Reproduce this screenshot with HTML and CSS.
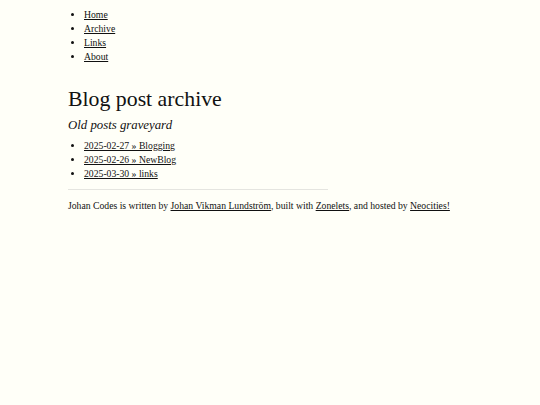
FILE: index.html
```html
<!DOCTYPE html>
<html lang="en">
<head>
<meta charset="utf-8">
<title>Blog post archive</title>
<link rel="stylesheet" href="styles.css">
</head>
<body>
<div class="container">
  <nav>
    <ul class="nav-list">
      <li><a href="#">Home</a></li>
      <li><a href="#">Archive</a></li>
      <li><a href="#">Links</a></li>
      <li><a href="#">About</a></li>
    </ul>
  </nav>
  <main>
    <h1 class="title">Blog post archive</h1>
    <p class="subtitle">Old posts graveyard</p>
    <ul class="post-list">
      <li><a href="#">2025-02-27 » Blogging</a></li>
      <li><a href="#">2025-02-26 » NewBlog</a></li>
      <li><a href="#">2025-03-30 » links</a></li>
    </ul>
  </main>
  <hr class="rule">
  <footer class="footer">Johan Codes is written by <a href="#">Johan Vikman Lundström</a>, built with <a href="#">Zonelets</a>, and hosted by <a href="#">Neocities!</a></footer>
</div>
</body>
</html>
```

FILE: styles.css
```css
html, body {
  margin: 0;
  padding: 0;
  background: #fffff8;
  color: #111111;
}
body {
  font-family: "Liberation Serif", "DejaVu Serif", serif;
  font-size: 9.7px;
  line-height: 14px;
}
.container {
  width: 404px;
  margin: 0 auto;
  padding-top: 8px;
}
a {
  color: #111111;
  text-decoration: underline;
}
ul {
  margin: 0;
  padding-left: 16px;
}
.nav-list li, .post-list li {
  line-height: 14px;
}
.title {
  font-weight: 400;
  font-size: 21.8px;
  line-height: 28px;
  margin: 21px 0 0 0;
}
.subtitle {
  font-style: italic;
  font-size: 12.8px;
  line-height: 18px;
  margin: 3px 0 5px 0;
}
.rule {
  width: 260px;
  margin: 8px 0 9px 0;
  border: 0;
  border-top: 1px solid #e5e5e0;
  height: 0;
}
.footer {
  line-height: 14px;
}
```
